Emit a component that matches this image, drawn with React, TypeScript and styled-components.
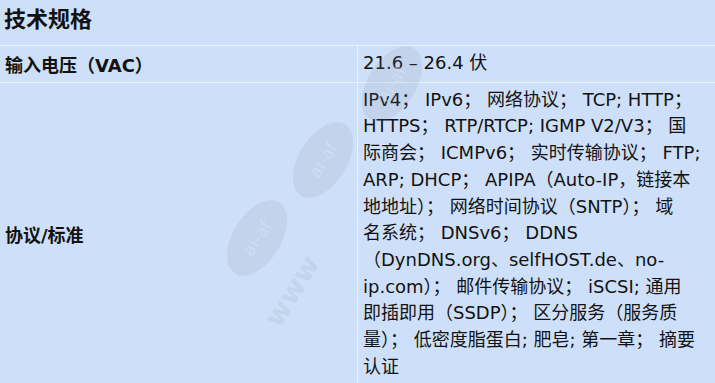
import React from 'react';
import styled, { createGlobalStyle } from 'styled-components';

const GlobalStyle = createGlobalStyle`
  html, body {
    margin: 0;
    padding: 0;
    background: #cee0f9;
  }
  body {
    font-family: "DejaVu Sans", "Noto Sans CJK SC", sans-serif;
    color: #121212;
  }
`;

// line breaks follow the original layout of the spec sheet
const protocols = [
  'IPv4； IPv6； 网络协议； TCP; HTTP；',
  'HTTPS； RTP/RTCP; IGMP V2/V3； 国',
  '际商会； ICMPv6； 实时传输协议； FTP;',
  'ARP; DHCP； APIPA（Auto-IP，链接本',
  '地地址）； 网络时间协议（SNTP）； 域',
  '名系统； DNSv6； DDNS',
  '（DynDNS.org、selfHOST.de、no-',
  'ip.com）； 邮件传输协议； iSCSI; 通用',
  '即插即用（SSDP）； 区分服务（服务质',
  '量）； 低密度脂蛋白; 肥皂; 第一章； 摘要',
  '认证',
].join('\n');

const specs = [
  { label: '输入电压（VAC）', value: '21.6 – 26.4 伏' },
  { label: '协议/标准', value: protocols },
];

const marks = [
  { x: 323, y: 160 },
  { x: 257, y: 238 },
  { x: 392, y: 84 },
];

const Watermark: React.FC = () => (
  <Overlay width="715" height="383" viewBox="0 0 715 383">
    {marks.map((m, i) => (
      <g key={i} transform={`translate(${m.x} ${m.y}) rotate(-58)`}>
        <ellipse rx="42" ry="24" fill="#7d8799" opacity="0.14" />
        <text
          x="0"
          y="6"
          textAnchor="middle"
          fontSize="17"
          fontFamily="DejaVu Sans, sans-serif"
          fill="#dfe8f6"
          opacity="0.45"
        >
          ai-af
        </text>
      </g>
    ))}
    <text
      x="0"
      y="0"
      transform="translate(300 296) rotate(-58)"
      textAnchor="middle"
      fontSize="28"
      fontWeight="700"
      fontFamily="DejaVu Sans, sans-serif"
      fill="#7d8799"
      opacity="0.12"
    >
      www
    </text>
  </Overlay>
);

const App: React.FC = () => {
  return (
    <>
      <GlobalStyle />
      <Page>
        <Title>技术规格</Title>
        <Table>
          {specs.map((s) => (
            <Row key={s.label}>
              <Label>{s.label}</Label>
              <Value>{s.value}</Value>
            </Row>
          ))}
        </Table>
        <Watermark />
      </Page>
    </>
  );
};

export default App;

const Page = styled.div`
  position: relative;
  width: 715px;
  height: 383px;
  overflow: hidden;
  background: #cee0f9;
`;

const Title = styled.h2`
  margin: 0;
  height: 45px;
  padding: 2px 4px 0;
  box-sizing: border-box;
  font-size: 22px;
  line-height: 30px;
  font-weight: 700;
  font-family: "Noto Sans CJK SC", sans-serif;
`;

const Table = styled.div`
  border-top: 1px solid #eaf1fc;
`;

const Row = styled.div`
  display: grid;
  grid-template-columns: 358px 1fr;
  border-bottom: 1px solid #eaf1fc;
`;

const Label = styled.div`
  display: flex;
  align-items: center;
  padding: 0 5px;
  font-size: 18px;
  font-weight: 700;
  font-family: "DejaVu Sans", "Noto Sans CJK SC", sans-serif;
  border-right: 1px solid #eaf1fc;
`;

const Value = styled.div`
  padding: 4px 2px 5px 5px;
  font-size: 18px;
  line-height: 26.7px;
  white-space: pre-line;
  font-family: "DejaVu Sans", "Noto Sans CJK SC", sans-serif;
`;

const Overlay = styled.svg`
  position: absolute;
  left: 0;
  top: 0;
  pointer-events: none;
`;
